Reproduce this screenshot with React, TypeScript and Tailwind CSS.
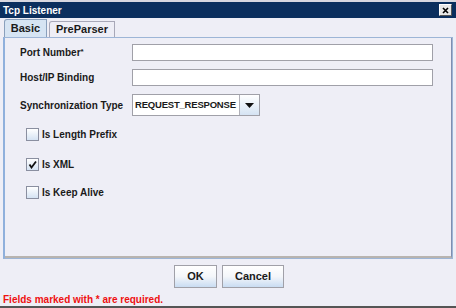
import React from "react";

const font = { fontFamily: '"Liberation Sans", Arial, sans-serif' };

function Check({ checked }: { checked?: boolean }) {
  return (
    <div className="w-[13px] h-[13px] border border-[#8a8fa0] bg-gradient-to-b from-[#ffffff] to-[#d5e3f3] flex items-center justify-center">
      {checked && (
        <svg width="9" height="9" viewBox="0 0 9 9">
          <path d="M1.5 4.5 L3.5 7.5 L8 1.5" stroke="#111" strokeWidth="1.8" fill="none" />
        </svg>
      )}
    </div>
  );
}

export default function App() {
  return (
    <div className="w-[456px] h-[308px] bg-[#eeeef6] flex flex-col text-[10px] font-bold text-[#1a1a1a] border-b-2 border-[#555]" style={font}>
      <div className="h-[2px] bg-[#d8d8e0] shrink-0" />
      <div className="h-[16px] bg-[#0b2f5e] flex items-center justify-between pl-[3px] pr-[4px] shrink-0">
        <span className="text-white text-[10px] font-bold">Tcp Listener</span>
        <div className="w-[13px] h-[12px] bg-[#e8e8e8] border border-[#fff] border-r-[#555] border-b-[#555] flex items-center justify-center">
          <svg width="7" height="7" viewBox="0 0 7 7">
            <path d="M1 1 L6 6 M6 1 L1 6" stroke="#000" strokeWidth="1.6" />
          </svg>
        </div>
      </div>
      <div className="flex items-end h-[19px] pl-[4px] shrink-0">
        <div className="h-[18px] w-[43px] bg-[#d6e4f3] border border-[#8aa0bc] border-b-0 rounded-tl-[3px] flex items-center justify-center text-[11px]">Basic</div>
        <div className="h-[16px] w-[66px] ml-[2px] bg-[#eeeef6] border border-[#a8a8b8] border-b-0 rounded-tl-[3px] flex items-center justify-center text-[11px]">PreParser</div>
      </div>
      <div className="mx-[3px] h-[222px] border border-[#9db5d6] border-l-2 border-l-[#8fb0dc] flex flex-col shrink-0">
        <div className="flex-1 border-r border-r-[#7f8fb0] border-b-2 border-b-[#b8b4b0] pt-[6px] pl-[15px] flex flex-col">
          <div className="flex items-center h-[17px]">
            <span className="w-[112px] whitespace-nowrap">Port Number<span className="relative top-[-2px] text-[8px]">*</span></span>
            <div className="w-[301px] h-[17px] bg-white border border-[#a0a0a8]" />
          </div>
          <div className="flex items-center h-[17px] mt-[8px]">
            <span className="w-[112px] whitespace-nowrap">Host/IP Binding</span>
            <div className="w-[301px] h-[17px] bg-white border border-[#a0a0a8]" />
          </div>
          <div className="flex items-center h-[22px] mt-[8px]">
            <span className="w-[112px] whitespace-nowrap">Synchronization Type</span>
            <div className="flex h-[22px] border border-[#a0a0a8]">
              <div className="w-[107px] bg-white flex items-center pl-[2px] border-r border-[#b0b0b8] whitespace-nowrap overflow-hidden text-[9.5px] tracking-[-0.2px]">REQUEST_RESPONSE</div>
              <div className="w-[19px] bg-gradient-to-b from-[#ffffff] to-[#d5e3f3] flex items-center justify-center">
                <svg width="9" height="5" viewBox="0 0 9 5"><path d="M0 0 L9 0 L4.5 5 Z" fill="#111" /></svg>
              </div>
            </div>
          </div>
          <div className="flex items-center gap-[3px] mt-[12px] pl-[6px] h-[13px]">
            <Check />
            <span>Is Length Prefix</span>
          </div>
          <div className="flex items-center gap-[3px] mt-[17px] pl-[6px] h-[13px]">
            <Check checked />
            <span>Is XML</span>
          </div>
          <div className="flex items-center gap-[3px] mt-[15px] pl-[6px] h-[13px]">
            <Check />
            <span>Is Keep Alive</span>
          </div>
        </div>
      </div>
      <div className="flex justify-center gap-[5px] mt-[6px] pl-[2px] shrink-0">
        <div className="w-[43px] h-[23px] border border-[#a0a0a8] bg-gradient-to-b from-[#ffffff] via-[#f4f6fa] to-[#c9dcf2] flex items-center justify-center text-[11px]">OK</div>
        <div className="w-[62px] h-[23px] border border-[#a0a0a8] bg-gradient-to-b from-[#ffffff] via-[#f4f6fa] to-[#c9dcf2] flex items-center justify-center text-[11px]">Cancel</div>
      </div>
      <div className="text-[#ee1111] pl-[3px] mt-[4px]">Fields marked with * are required.</div>
    </div>
  );
}
